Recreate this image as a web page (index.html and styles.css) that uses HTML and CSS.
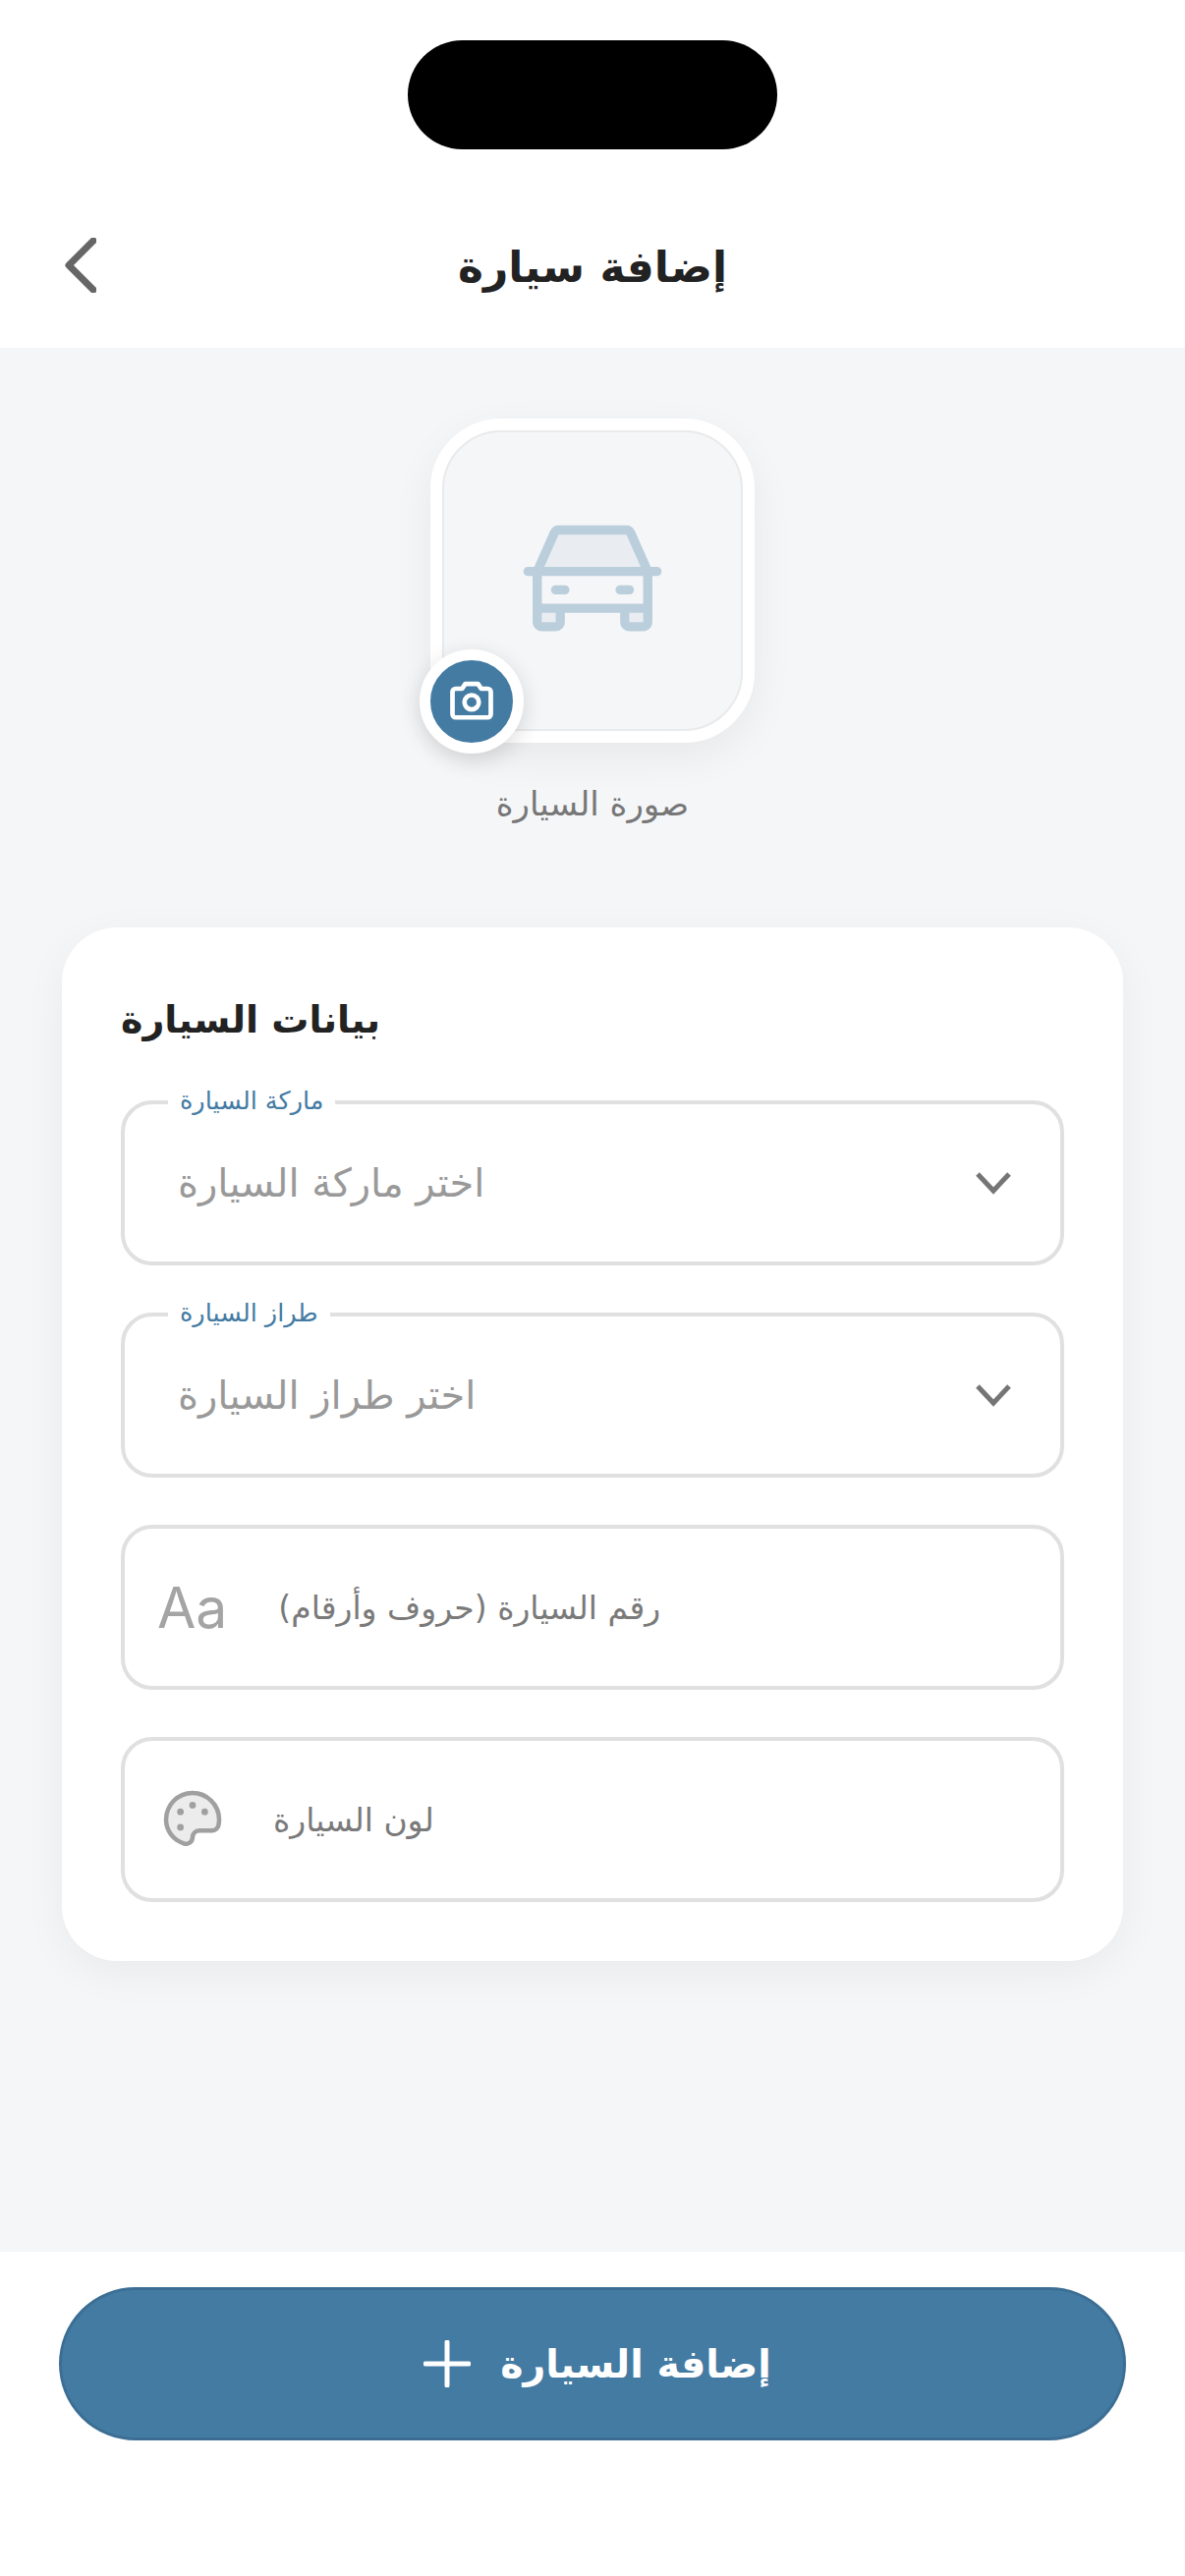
FILE: index.html
```html
<!DOCTYPE html>
<html lang="en">
<head>
    <meta charset="UTF-8">
    <title>إضافة سيارة</title>
    <link rel="stylesheet" href="styles.css">
</head>
<body>
    <div class="notch"></div>

    <header class="header">
        <svg class="back-icon" viewBox="0 0 32 56"><polyline points="29,3 4,28 29,53"/></svg>
        <h1 dir="rtl">إضافة سيارة</h1>
        <span class="header-spacer"></span>
    </header>

    <main class="content">
        <div class="photo">
            <div class="photo-box">
                <svg class="car-icon" viewBox="0 0 256 256">
                    <path class="duo" d="M69.2,48H186.8l24.89,56H44.31ZM40,184H64v16H40Zm152,0h24v16H192Z"/>
                    <path d="M240,104H229.2L201.42,41.5A16,16,0,0,0,186.8,32H69.2a16,16,0,0,0-14.62,9.5L26.8,104H16a8,8,0,0,0,0,16h8v80a16,16,0,0,0,16,16H64a16,16,0,0,0,16-16V184h96v16a16,16,0,0,0,16,16h24a16,16,0,0,0,16-16V120h8a8,8,0,0,0,0-16ZM69.2,48H186.8l24.89,56H44.31ZM64,200H40V184H64Zm128,0V184h24v16Zm24-32H40V120H216ZM56,144a8,8,0,0,1,8-8H80a8,8,0,0,1,0,16H64A8,8,0,0,1,56,144Zm112,0a8,8,0,0,1,8-8h16a8,8,0,0,1,0,16H176A8,8,0,0,1,168,144Z"/>
                </svg>
            </div>
            <div class="camera-badge">
                <svg class="camera-icon" viewBox="0 0 256 256"><path d="M208,56H180.28L166.65,35.56A8,8,0,0,0,160,32H96a8,8,0,0,0-6.65,3.56L75.71,56H48A24,24,0,0,0,24,80V192a24,24,0,0,0,24,24H208a24,24,0,0,0,24-24V80A24,24,0,0,0,208,56Zm8,136a8,8,0,0,1-8,8H48a8,8,0,0,1-8-8V80a8,8,0,0,1,8-8H80a8,8,0,0,0,6.66-3.56L100.28,48h55.43l13.63,20.44A8,8,0,0,0,176,72h32a8,8,0,0,1,8,8ZM128,88a44,44,0,1,0,44,44A44.05,44.05,0,0,0,128,88Zm0,72a28,28,0,1,1,28-28A28,28,0,0,1,128,160Z"/></svg>
            </div>
        </div>
        <p class="photo-label" dir="rtl">صورة السيارة</p>

        <section class="card">
            <h2 dir="rtl">بيانات السيارة</h2>

            <div class="field select">
                <span class="field-label" dir="rtl">ماركة السيارة</span>
                <span class="placeholder" dir="rtl">اختر ماركة السيارة</span>
                <svg class="chevron-icon" viewBox="0 0 36 24"><polyline points="2,3 18,20 34,3"/></svg>
            </div>

            <div class="field select">
                <span class="field-label" dir="rtl">طراز السيارة</span>
                <span class="placeholder" dir="rtl">اختر طراز السيارة</span>
                <svg class="chevron-icon" viewBox="0 0 36 24"><polyline points="2,3 18,20 34,3"/></svg>
            </div>

            <div class="field">
                <span class="aa-icon">Aa</span>
                <span class="input-text" dir="rtl">رقم السيارة (حروف وأرقام)</span>
            </div>

            <div class="field">
                <svg class="palette-icon" viewBox="0 0 256 256">
                    <path class="duo" d="M200.77,53.89A103.27,103.27,0,0,0,128,24h-1.07A104,104,0,0,0,24,128c0,43,26.58,79.06,69.36,94.17A32,32,0,0,0,136,192a16,16,0,0,1,16-16h46.21a31.81,31.81,0,0,0,31.2-24.88,104.43,104.43,0,0,0,2.59-24A103.28,103.28,0,0,0,200.77,53.89Z"/>
                    <path d="M200.77,53.89A103.27,103.27,0,0,0,128,24h-1.07A104,104,0,0,0,24,128c0,43,26.58,79.06,69.36,94.17A32,32,0,0,0,136,192a16,16,0,0,1,16-16h46.21a31.81,31.81,0,0,0,31.2-24.88,104.43,104.43,0,0,0,2.59-24A103.28,103.28,0,0,0,200.77,53.89Zm13,93.71A15.89,15.89,0,0,1,198.21,160H152a32,32,0,0,0-32,32,16,16,0,0,1-21.31,15.07C62.49,194.3,40,164,40,128a88,88,0,0,1,87.09-88h.9a88.35,88.35,0,0,1,88,87.25A88.86,88.86,0,0,1,213.81,147.6ZM140,76a12,12,0,1,1-12-12A12,12,0,0,1,140,76ZM96,100A12,12,0,1,1,84,88,12,12,0,0,1,96,100Zm0,56a12,12,0,1,1-12-12A12,12,0,0,1,96,156Zm88-56a12,12,0,1,1-12-12A12,12,0,0,1,184,100Z"/>
                </svg>
                <span class="input-text color-text" dir="rtl">لون السيارة</span>
            </div>
        </section>
    </main>

    <footer class="footer">
        <button class="submit">
            <svg class="plus-icon" viewBox="0 0 48 48"><path d="M24 2V46M2 24H46"/></svg>
            <span dir="rtl">إضافة السيارة</span>
        </button>
    </footer>
</body>
</html>
```

FILE: styles.css
```css
/* Reset and Base Styles */
* {
    margin: 0;
    padding: 0;
    box-sizing: border-box;
}

body {
    width: 1206px;
    height: 2622px;
    display: flex;
    flex-direction: column;
    position: relative;
    overflow: hidden;
    background-color: #ffffff;
    font-family: "DejaVu Sans", sans-serif;
    color: #222222;
}

.notch {
    position: absolute;
    top: 41px;
    left: 415px;
    width: 376px;
    height: 111px;
    border-radius: 56px;
    background-color: #000000;
}

/* Header */
.header {
    height: 354px;
    padding: 242px 66px 0;
    display: grid;
    grid-template-columns: 100px 1fr 100px;
    align-items: start;
}

.back-icon {
    width: 32px;
    height: 56px;
    fill: none;
    stroke: #666666;
    stroke-width: 7;
    stroke-linecap: round;
    stroke-linejoin: round;
}

.header h1 {
    padding-top: 4px;
    font-size: 44px;
    font-weight: 700;
    text-align: center;
    color: #222222;
}

/* Content */
.content {
    flex: 1;
    padding-top: 72px;
    background-color: #f5f6f8;
    display: flex;
    flex-direction: column;
    align-items: center;
}

.photo {
    position: relative;
    width: 330px;
    height: 330px;
}

.photo-box {
    width: 100%;
    height: 100%;
    border: 12px solid #ffffff;
    border-radius: 72px;
    outline: 2px solid #e9eaeb;
    outline-offset: -14px;
    box-shadow: 0 14px 44px rgba(0, 0, 0, 0.06);
    display: flex;
    align-items: center;
    justify-content: center;
}

.car-icon {
    width: 150px;
    height: 150px;
    fill: #447ba3;
    opacity: 0.32;
}

.duo {
    opacity: 0.2;
}

.camera-badge {
    position: absolute;
    left: -11px;
    top: 235px;
    width: 106px;
    height: 106px;
    border: 11px solid #ffffff;
    border-radius: 50%;
    background-color: #447ba3;
    box-shadow: 0 6px 22px rgba(0, 0, 0, 0.14);
    display: flex;
    align-items: center;
    justify-content: center;
}

.camera-icon {
    width: 52px;
    height: 52px;
    fill: #ffffff;
    stroke: #ffffff;
    stroke-width: 7;
}

.photo-label {
    margin-top: 42px;
    font-size: 34px;
    color: #777777;
}

/* Card */
.card {
    width: 1080px;
    margin-top: 106px;
    padding: 72px 60px 60px;
    background-color: #ffffff;
    border-radius: 56px;
    box-shadow: 0 12px 44px rgba(0, 0, 0, 0.05);
    display: flex;
    flex-direction: column;
    gap: 48px;
}

.card h2 {
    font-size: 38px;
    font-weight: 700;
    text-align: left;
    color: #222222;
    margin-bottom: 12px;
}

.field {
    position: relative;
    height: 168px;
    padding: 0 50px 0 33px;
    border: 4px solid #e0e0e0;
    border-radius: 32px;
    display: flex;
    align-items: center;
}

.select {
    justify-content: space-between;
    padding-left: 54px;
}

.field-label {
    position: absolute;
    top: -19px;
    left: 44px;
    padding: 0 12px;
    font-size: 25.5px;
    background-color: #ffffff;
    color: #447ba3;
}

.placeholder {
    font-size: 40px;
    color: #999999;
}

.chevron-icon {
    width: 36px;
    height: 24px;
    fill: none;
    stroke: #757575;
    stroke-width: 5;
}

.aa-icon {
    position: relative;
    font-family: "Inter", sans-serif;
    font-size: 57px;
    font-weight: 400;
    color: #a4a4a4;
}

/* light tint inside the A, like the other duotone icons */
.aa-icon::before {
    content: "";
    position: absolute;
    left: 9px;
    bottom: 26px;
    width: 26px;
    height: 30px;
    background-color: #eeeeee;
    clip-path: polygon(50% 0, 100% 100%, 0 100%);
    z-index: -1;
}

.input-text {
    margin-left: 52px;
    font-size: 33px;
    color: #7a7a7a;
}

.palette-icon {
    width: 72px;
    height: 72px;
    fill: #a0a0a0;
}

.color-text {
    margin-left: 46px;
}

/* Footer */
.footer {
    height: 330px;
    padding: 36px 60px 0;
    background-color: #ffffff;
}

.submit {
    width: 100%;
    height: 156px;
    padding-left: 10px;
    border: 3px solid #3c6e94;
    border-radius: 78px;
    background-color: #447ba3;
    color: #ffffff;
    font-family: inherit;
    font-size: 39.5px;
    font-weight: 700;
    display: flex;
    align-items: center;
    justify-content: center;
    gap: 30px;
}

.plus-icon {
    width: 48px;
    height: 48px;
    fill: none;
    stroke: #ffffff;
    stroke-width: 5;
    stroke-linecap: round;
}
```
